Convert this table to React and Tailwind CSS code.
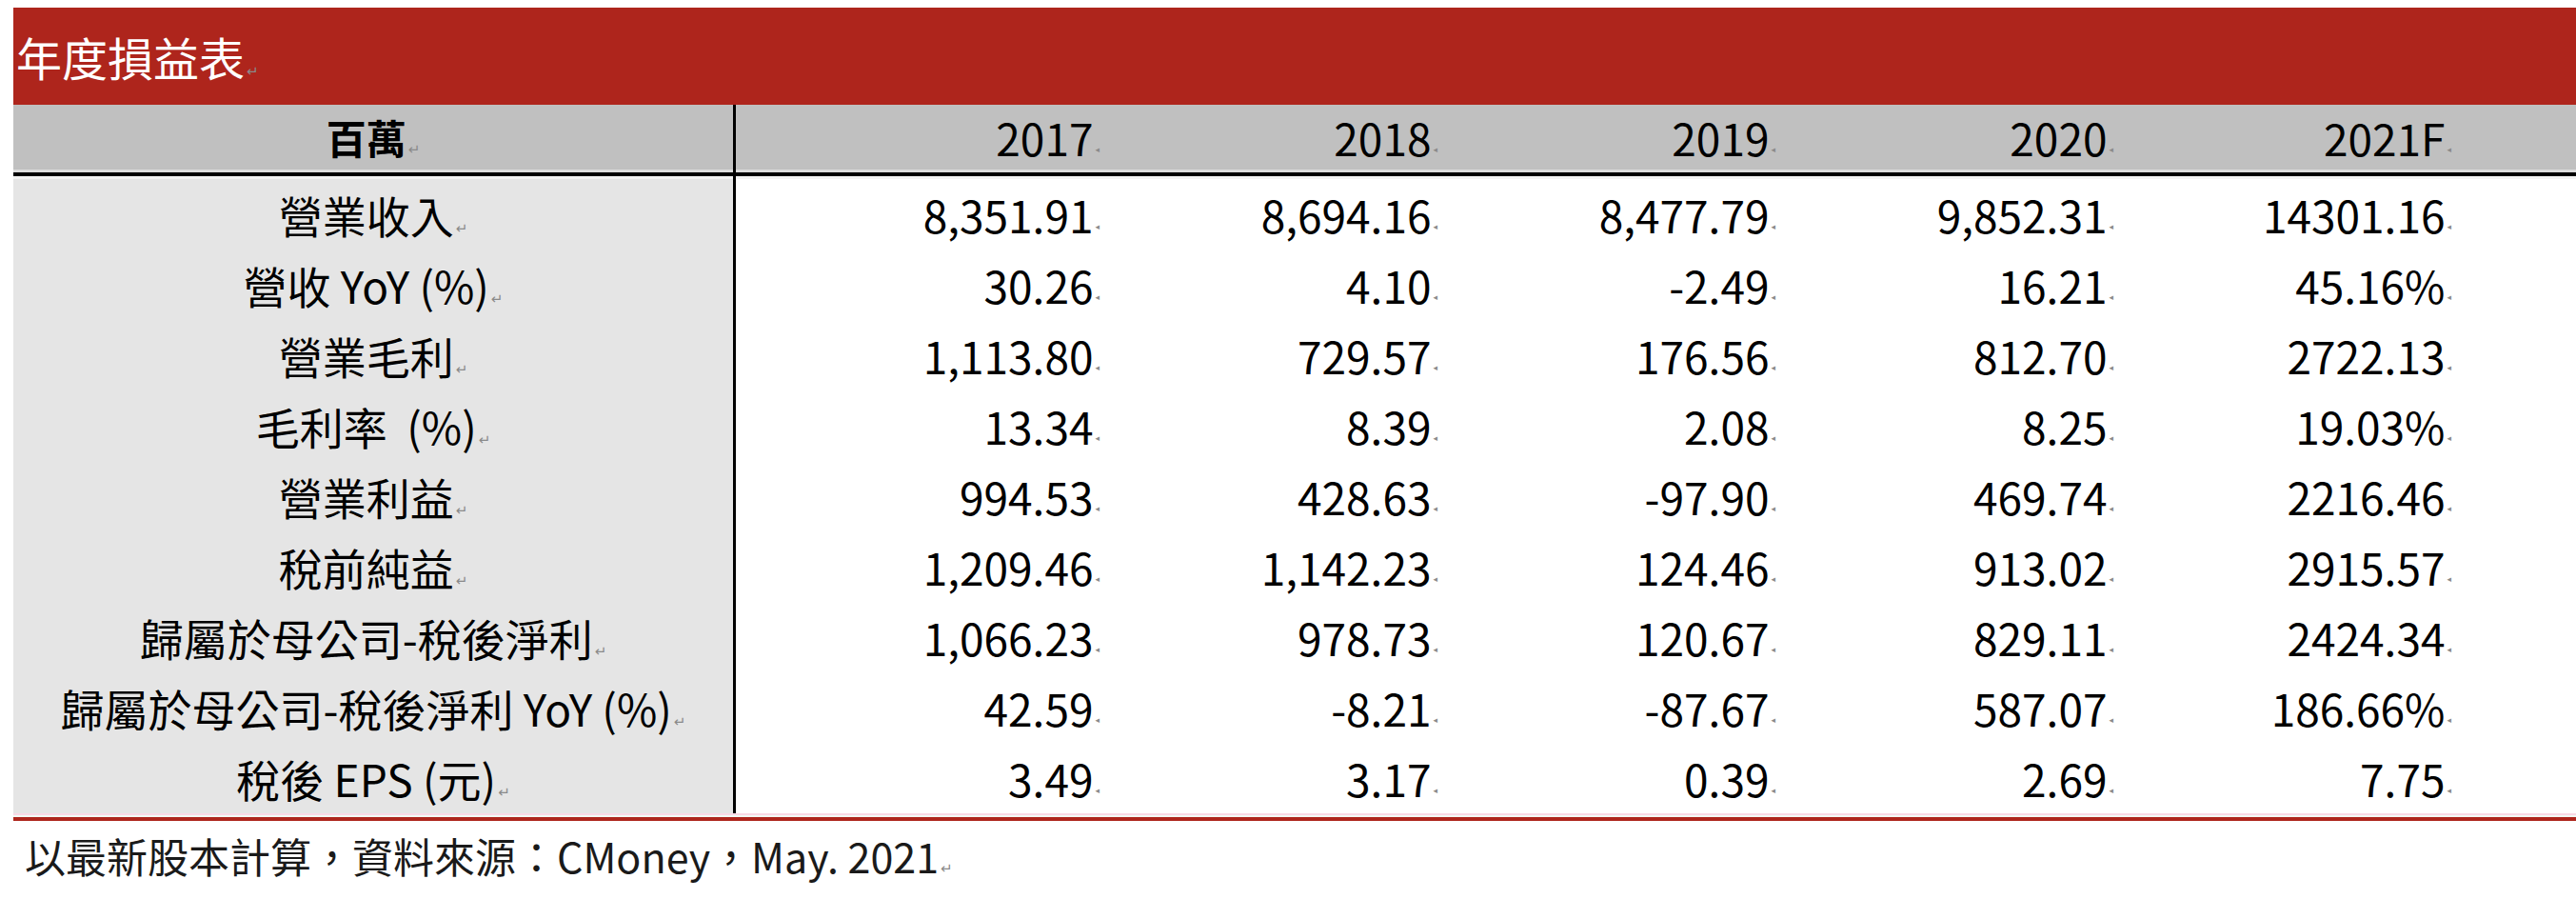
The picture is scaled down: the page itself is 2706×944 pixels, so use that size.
import React from "react";

const years = ["2017", "2018", "2019", "2020", "2021F"];

const rows = [
  { label: "營業收入", vals: ["8,351.91", "8,694.16", "8,477.79", "9,852.31", "14301.16"] },
  { label: "營收 YoY (%)", vals: ["30.26", "4.10", "-2.49", "16.21", "45.16%"] },
  { label: "營業毛利", vals: ["1,113.80", "729.57", "176.56", "812.70", "2722.13"] },
  { label: "毛利率  (%)", vals: ["13.34", "8.39", "2.08", "8.25", "19.03%"] },
  { label: "營業利益", vals: ["994.53", "428.63", "-97.90", "469.74", "2216.46"] },
  { label: "稅前純益", vals: ["1,209.46", "1,142.23", "124.46", "913.02", "2915.57"] },
  { label: "歸屬於母公司-稅後淨利", vals: ["1,066.23", "978.73", "120.67", "829.11", "2424.34"] },
  { label: "歸屬於母公司-稅後淨利 YoY (%)", vals: ["42.59", "-8.21", "-87.67", "587.07", "186.66%"] },
  { label: "稅後 EPS (元)", vals: ["3.49", "3.17", "0.39", "2.69", "7.75"] },
];

const colW = ["w-[392px]", "w-[355px]", "w-[355px]", "w-[355px]", "w-[355px]"];

const font = { fontFamily: '"Noto Sans CJK TC", "Noto Sans", sans-serif' };

// word paragraph mark, sits on the text baseline
function ParaMark() {
  return (
    <span className="ml-[2px] text-[15px] text-[#8a8a8a] font-['DejaVu_Sans'] font-normal">↵</span>
  );
}

// word end-of-cell mark
function CellMark() {
  return (
    <span className="ml-[2px] relative -top-[4px] text-[9px] text-[#8a8a8a] font-['DejaVu_Sans']">◂</span>
  );
}

function NumCell({ w, children }) {
  return (
    <div className={`${w} shrink-0 flex items-center justify-end pr-[10px]`}>
      <span className="text-[46px] leading-none whitespace-nowrap">
        {children}
        <CellMark />
      </span>
    </div>
  );
}

export default function App() {
  return (
    <div className="w-[2706px] h-[944px] bg-white text-black overflow-hidden" style={font}>
      <div className="pt-[8px] pl-[14px]">
        {/* title bar */}
        <div className="h-[102px] bg-[#ae251c] flex items-center pl-[3px]">
          <span className="text-[48px] leading-none text-white">
            年度損益表
            <ParaMark />
          </span>
        </div>

        {/* header */}
        <div className="h-[68px] bg-[#c0c0c0] flex">
          <div className="w-[759px] shrink-0 border-r-[3px] border-black flex items-center justify-center">
            <span className="text-[42px] leading-none font-bold">
              百萬
              <ParaMark />
            </span>
          </div>
          {years.map((y, i) => (
            <NumCell key={y} w={colW[i]}>
              {y}
            </NumCell>
          ))}
        </div>
        <div className="flex h-[10px]">
          <div className="w-[756px] shrink-0 flex flex-col">
            <div className="h-[3px] bg-[#dcdcdc]" />
            <div className="h-[4px] bg-black" />
            <div className="h-[3px] bg-[#f2f2f2]" />
          </div>
          <div className="w-[3px] bg-black" />
          <div className="flex-1 flex flex-col">
            <div className="h-[3px] bg-[#dcdcdc]" />
            <div className="h-[4px] bg-black" />
            <div className="h-[3px] bg-[#f4f4f4]" />
          </div>
        </div>

        {/* body */}
        {rows.map((r) => (
          <div key={r.label} className="h-[74px] flex">
            <div className="w-[759px] shrink-0 bg-[#e5e5e5] border-r-[3px] border-black flex items-center justify-center">
              <span className="text-[46px] leading-none whitespace-pre">
                {r.label}
                <ParaMark />
              </span>
            </div>
            {r.vals.map((v, i) => (
              <NumCell key={i} w={colW[i]}>
                {v}
              </NumCell>
            ))}
          </div>
        ))}
        <div className="h-[2px] bg-[#f9d9e6]" />
        <div className="h-[2px] bg-[#f3fbf5]" />
        <div className="h-[4px] bg-[#ae251c]" />

        {/* footnote */}
        <div className="mt-[15px] pl-[12px]">
          <span className="text-[43px] leading-none text-[#1a1a1a]">
            以最新股本計算，資料來源：CMoney，May. 2021
            <ParaMark />
          </span>
        </div>
      </div>
    </div>
  );
}
